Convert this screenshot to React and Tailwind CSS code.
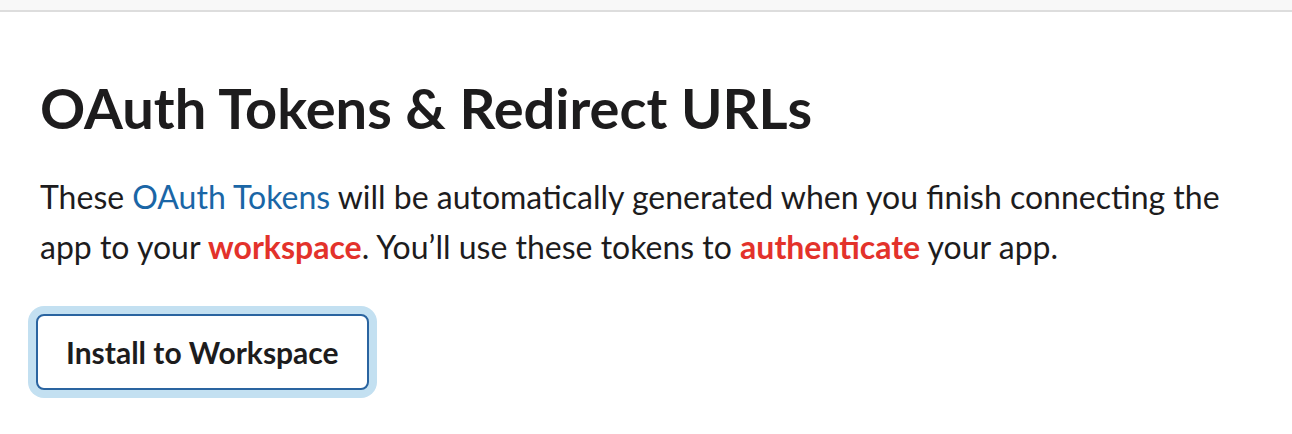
import React from 'react';

export default function App() {
  return (
    <div className="min-h-screen bg-white text-[#1d1c1d]" style={{ fontFamily: 'Lato, "Noto Sans", sans-serif' }}>
      {/* top strip */}
      <div className="h-[12px] bg-[#f8f8f8] border-b-2 border-[#dddddd]" />

      <div className="px-[40px] pt-[62px]">
        <h1 className="text-[56px] leading-[1.2] font-bold">OAuth Tokens &amp; Redirect URLs</h1>

        <p className="mt-[31px] max-w-[1200px] text-[32px] leading-[50px]">
          These <a href="#" className="text-[#1a66a6]">OAuth Tokens</a> will be automatically generated when you finish connecting the app to your{' '}
          <span className="font-bold text-[#e3322b]">workspace</span>. You’ll use these tokens to{' '}
          <span className="font-bold text-[#e3322b]">authenticate</span> your app.
        </p>

        <div className="mt-[42px] ml-[-4px]">
          <button className="h-[76px] px-[28px] rounded-lg border-2 border-[#2a64a0] bg-white text-[30px] font-bold text-[#1d1c1d] shadow-[0_0_0_8px_#c3e0f1]">
            Install to Workspace
          </button>
        </div>
      </div>
    </div>
  );
}
